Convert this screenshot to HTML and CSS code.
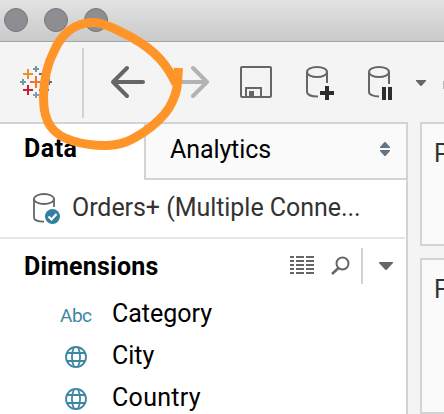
FILE: index.html
```html
<!DOCTYPE html>
<html lang="en">
<head>
<meta charset="utf-8">
<title>Workbook</title>
<link rel="stylesheet" href="styles.css">
</head>
<body>
<div class="window">
  <header class="titlebar"><i class="light"></i><i class="light"></i><i class="light"></i></header>
  <nav class="toolbar">
    <svg class="logo" width="34" height="34" viewBox="0 0 34 34" fill="none" stroke-width="2">
      <path stroke="#7198a5" d="M13 4h6M16 1v6M0 17h6M3 14v6"/>
      <path stroke="#e8912d" d="M3 9h10M8 4v10"/>
      <path stroke="#c72035" d="M3 25h10M8 20v10"/>
      <path stroke="#eb762d" d="M10 17h12M16 11v12"/>
      <path stroke="#8899b5" d="M13 30h6M16 27v6"/>
      <path stroke="#5c6692" d="M19 9h10M24 4v10M19 25h10M24 20v10M26 17h6M29 14v6"/>
    </svg>
    <i class="divider"></i>
    <svg class="arrow" width="36" height="34" viewBox="0 0 36 34" fill="none" stroke="#666" stroke-width="4" stroke-linecap="round" stroke-linejoin="round"><path d="M18 3L4 17l14 14M4 17h30"/></svg>
    <svg class="arrow next" width="36" height="34" viewBox="0 0 36 34" fill="none" stroke="#b3b3b3" stroke-width="4" stroke-linecap="round" stroke-linejoin="round"><path d="M16 3l14 14-14 14M30 17H1"/></svg>
    <svg class="save" width="32" height="32" viewBox="0 0 32 32" fill="none" stroke="#666" stroke-width="2"><rect x="1" y="1" width="30" height="30" rx="1"/><path d="M6 31v-9h15v9"/><path fill="#666" stroke="none" d="M9 25h5v6H9z"/></svg>
    <svg class="db" width="28" height="34" viewBox="0 0 28 34" fill="none" stroke="#666" stroke-width="2"><ellipse cx="11" cy="6" rx="10" ry="5"/><path d="M1 6v20c0 2.500 4 4.500 11 4.500M21 6v11"/><path stroke="#2d2d2d" stroke-width="4" d="M14 27h14M21 20v14"/></svg>
    <svg class="db paused" width="25" height="34" viewBox="0 0 25 34" fill="none" stroke="#666" stroke-width="2"><ellipse cx="11" cy="6" rx="10" ry="5"/><path d="M1 6v20c0 2.500 4 4.500 10 4.500M21 6v12"/><path stroke="#2d2d2d" stroke-width="4" d="M16 21v13M22 21v13"/></svg>
    <svg class="caret" width="10" height="6" viewBox="0 0 10 6"><path fill="#666" d="M0 0h10v1L5.500 6h-1L0 1z"/></svg>
    <i class="cut"></i>
  </nav>
  <main class="work">
    <aside class="side">
      <div class="tabs">
        <div class="tab active"><span>Data</span></div>
        <div class="tab other"><span>Analytics</span>
          <svg class="sort" width="10" height="14" viewBox="0 0 10 14" fill="#647482"><path d="M0 6V5l4.500-5h1L10 5v1zM0 8h10v1l-4.500 5h-1L0 9z"/></svg>
        </div>
      </div>
      <div class="source">
        <svg class="sourceicon" width="28" height="31" viewBox="0 0 28 31" fill="none" stroke="#666" stroke-width="1.800"><ellipse cx="11" cy="6" rx="10" ry="5"/><path d="M1 6v18.500c0 2.500 4 4 10 4.200M21 6v8"/><circle cx="19.500" cy="23.500" r="7.500" fill="#347f9d" stroke="none"/><path stroke="#fff" stroke-width="2.200" d="M15.500 23.500l3 3 5-5.500"/></svg>
        <span>Orders+ (Multiple Conne...</span>
      </div>
      <div class="heading">
        <h2>Dimensions</h2>
        <svg class="list" width="24" height="18" viewBox="0 0 24 18" fill="none" stroke="#666" stroke-width="2"><path d="M0 1h4m2 0h8m2 0h8M0 5h4m2 0h8m2 0h8M0 9h4m2 0h8m2 0h8M0 13h4m2 0h8m2 0h8M0 17h4m2 0h8m2 0h8"/></svg>
        <svg class="find" width="19" height="19" viewBox="0 0 19 19" fill="none" stroke="#666"><circle cx="11.500" cy="7.500" r="6" stroke-width="2"/><path stroke-width="2.500" d="M7.500 12L1 18"/></svg>
        <i class="bar"></i>
        <svg class="menu" width="14" height="8" viewBox="0 0 14 8"><path fill="#666" d="M0 0h14v1L7.500 8h-1L0 1z"/></svg>
      </div>
      <ul class="fields">
        <li><b class="type">Abc</b><span>Category</span></li>
        <li><svg class="globe" width="22" height="22" viewBox="0 0 22 22" fill="none" stroke="#3d87a4" stroke-width="1.800"><circle cx="11" cy="11" r="10"/><path d="M2 7h18M2 15h18M9 1C6.500 7 6.500 15 9 21M13 1c2.500 6 2.500 14 0 20"/></svg><span>City</span></li>
        <li><svg class="globe" width="22" height="22" viewBox="0 0 22 22" fill="none" stroke="#3d87a4" stroke-width="1.800"><circle cx="11" cy="11" r="10"/><path d="M2 7h18M2 15h18M9 1C6.500 7 6.500 15 9 21M13 1c2.500 6 2.500 14 0 20"/></svg><span class="country">Country</span></li>
      </ul>
    </aside>
    <section class="shelves">
      <div class="shelf pages">P</div>
      <div class="shelf filters">F</div>
    </section>
  </main>
  <svg class="highlight" width="444" height="414" viewBox="0 0 444 414" fill="none" stroke="#ff9528" stroke-width="9"><path stroke-linejoin="bevel" d="M178.500 68L177.500 83C177 92 173 101 169 108C163 117 153 126 144 132C132 140 122 145.500 105 145.500C94 145.500 83 144 73 141C63 138 56 134 51 127C45 119 43.500 108 43.500 98C43.500 82 46 66 55 49C62 34 75 22.500 94 22.500C103 22.500 116 29 130 36.500C141 42.500 151 49 160 59C167 67 172 75 176 84"/></svg>
</div>
</body>
</html>
```
FILE: styles.css
```css
* { box-sizing: border-box; }
body { margin: 0; font-family: Roboto, "Liberation Sans", sans-serif; font-size: 25px; color: #000; }
svg { display: block; flex: none; }
i { display: block; flex: none; }
.window { position: relative; width: 444px; height: 414px; overflow: hidden; background: #f4f4f4; }
.titlebar { display: flex; gap: 16px; height: 42px; padding: 8px 0 0 4px; background: linear-gradient(#e2e2e2, #cacaca); border-bottom: 1px solid #a5a5a5; }
.light { width: 24px; height: 24px; border-radius: 50%; background: #8e8d92; border: 1px solid #77767b; }
.toolbar { display: flex; height: 80px; align-items: flex-start; padding: 23px 0 0 20px; }
.divider { width: 2px; height: 70px; margin: -17px 0 0 28px; background: #d3d3d3; }
.arrow { margin: 0 0 0 25px; }
.next { margin-left: 32px; }
.save { margin: 1px 0 0 27px; }
.db { margin: 1px 0 0 34px; }
.paused { margin-left: 34px; }
.caret { margin: 15px 0 0 23px; }
.cut { width: 10px; height: 8px; margin: 16px 0 0 17px; background: #bbb; }
.work { display: flex; height: 292px; }
.side { width: 408px; flex: none; background: #fff; border-top: 2px solid #d3d3d3; border-right: 2px solid #d3d3d3; }
.tabs { display: flex; height: 56px; }
.tab { display: flex; line-height: 50px; }
.active { width: 144px; padding-left: 24px; font-weight: 700; }
.active span { letter-spacing: 0.5px; }
.other { width: 262px; justify-content: space-between; padding: 1px 16px 0 24px; background: #fafafa; border-left: 2px solid #d3d3d3; border-bottom: 2px solid #d3d3d3; letter-spacing: -0.1px; }
.sort { margin-top: 17px; }
.source { display: flex; width: 405px; height: 59px; padding-left: 33px; border-bottom: 2px solid #e5e5e5; color: #333; line-height: 55px; white-space: nowrap; letter-spacing: -0.05px; }
.sourceicon { margin: 13px 11px 0 0; }
.heading { display: flex; height: 54px; padding-left: 24px; align-items: flex-start; }
.heading h2 { width: 266px; margin: 0; font-size: 25px; line-height: 55px; letter-spacing: 0.2px; }
.list { margin-top: 17px; }
.find { margin: 17px 0 0 17px; }
.bar { width: 2px; height: 36px; margin: 9px 0 0 11px; background: #d3d3d3; }
.menu { margin: 23px 0 0 16px; }
.fields { margin: 0; padding: 0; list-style: none; }
.fields li { display: flex; height: 42px; line-height: 42px; align-items: flex-start; }
.type { width: 52px; margin-left: 60px; color: #3d87a4; font-size: 19px; font-weight: 400; line-height: 45px; letter-spacing: -0.5px; }
.globe { margin: 11px 25px 0 65px; }
.country { letter-spacing: 0.3px; }
.shelves { flex: none; width: 160px; margin-left: 12px; display: flex; flex-direction: column; gap: 12px; }
.shelf { background: #fafafa; border: 2px solid #d3d3d3; padding-left: 12px; color: #333; }
.pages { height: 124px; line-height: 60px; }
.filters { height: 156px; line-height: 60px; }
.highlight { position: absolute; left: 0; top: 0; }
```
